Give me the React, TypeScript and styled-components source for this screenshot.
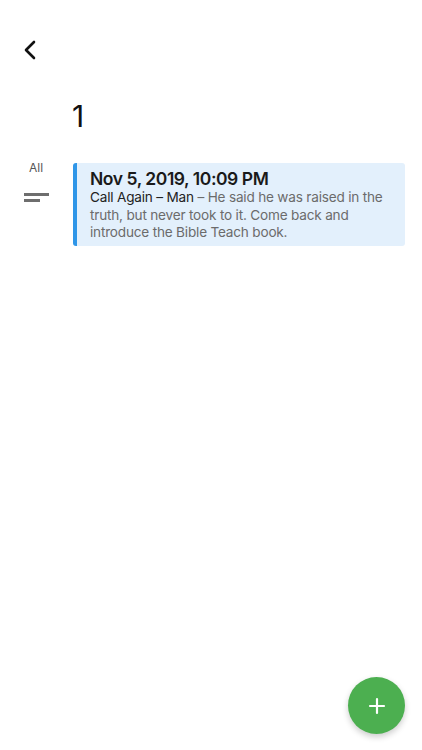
import { createGlobalStyle } from 'styled-components'
import styled from 'styled-components'

const GlobalStyle = createGlobalStyle`
  html, body {
    margin: 0;
    padding: 0;
    background: #ffffff;
  }
  body {
    font-family: Inter, "Noto Sans", "Liberation Sans", sans-serif;
    color: #111;
  }
`

const Page = styled.div`
  position: relative;
  width: 422px;
  height: 750px;
  overflow: hidden;
  background: #fff;
`

const TopBar = styled.div`
  height: 98px;
  display: flex;
  align-items: flex-start;
  padding: 38px 0 0 20px;
  box-sizing: border-box;
`

const BackButton = styled.button`
  width: 20px;
  height: 24px;
  padding: 0;
  border: 0;
  background: none;
  display: flex;
  align-items: center;
  justify-content: center;
`

const Heading = styled.h1`
  margin: 0;
  padding-left: 72px;
  font-size: 30px;
  font-weight: 400;
  line-height: 36px;
  color: #111;
`

const Body = styled.div`
  display: grid;
  grid-template-columns: 73px 332px;
  margin-top: 29px;
`

const SideColumn = styled.div`
  display: flex;
  flex-direction: column;
  align-items: center;
  padding-right: 1px;
`

const SideLabel = styled.div`
  font-size: 12px;
  color: #555;
  line-height: 14px;
  margin-top: -2px;
`

const SortIcon = styled.div`
  margin-top: 18px;
  display: flex;
  flex-direction: column;
  gap: 3px;
  width: 25px;
`

const SortLine = styled.div<{ $w: number }>`
  width: ${p => p.$w}px;
  height: 3px;
  background: #6e6e6e;
`

const Card = styled.div`
  background: #e3f0fc;
  border-left: 4px solid #2f96e8;
  border-radius: 3px;
  padding: 5px 10px 4px 13px;
  min-height: 81px;
  box-sizing: border-box;
`

const CardTitle = styled.div`
  font-size: 17.5px;
  font-weight: 600;
  letter-spacing: -0.45px;
  color: #1a1a1a;
  line-height: 21px;
`

const CardText = styled.div`
  font-size: 13.6px;
  letter-spacing: -0.2px;
  line-height: 17.5px;
  color: #6b6b6b;
`

const Strong = styled.span`
  color: #222;
`

const Fab = styled.button`
  position: absolute;
  left: 348px;
  top: 677px;
  width: 57px;
  height: 57px;
  border-radius: 50%;
  border: 0;
  background: #4caf50;
  box-shadow: 0 3px 6px rgba(0, 0, 0, 0.2);
  display: flex;
  align-items: center;
  justify-content: center;
  padding: 0;
`

export default function App() {
  return (
    <Page>
      <GlobalStyle />
      <TopBar>
        <BackButton aria-label="back">
          <svg width="16" height="22" viewBox="0 0 16 22">
            <path d="M12 3 L4 11 L12 19" fill="none" stroke="#111" strokeWidth="2.6" strokeLinecap="round" strokeLinejoin="round" />
          </svg>
        </BackButton>
      </TopBar>
      <Heading>1</Heading>
      <Body>
        <SideColumn>
          <SideLabel>All</SideLabel>
          <SortIcon>
            <SortLine $w={25} />
            <SortLine $w={16} />
          </SortIcon>
        </SideColumn>
        <Card>
          <CardTitle>Nov 5, 2019, 10:09 PM</CardTitle>
          <CardText>
            <Strong>Call Again – Man</Strong> – He said he was raised in the truth, but never took to it. Come back and introduce the Bible Teach book.
          </CardText>
        </Card>
      </Body>
      <Fab aria-label="add">
        <svg width="18" height="18" viewBox="0 0 18 18">
          <path d="M9 2 V16 M2 9 H16" stroke="#fff" strokeWidth="2.2" strokeLinecap="round" />
        </svg>
      </Fab>
    </Page>
  )
}
